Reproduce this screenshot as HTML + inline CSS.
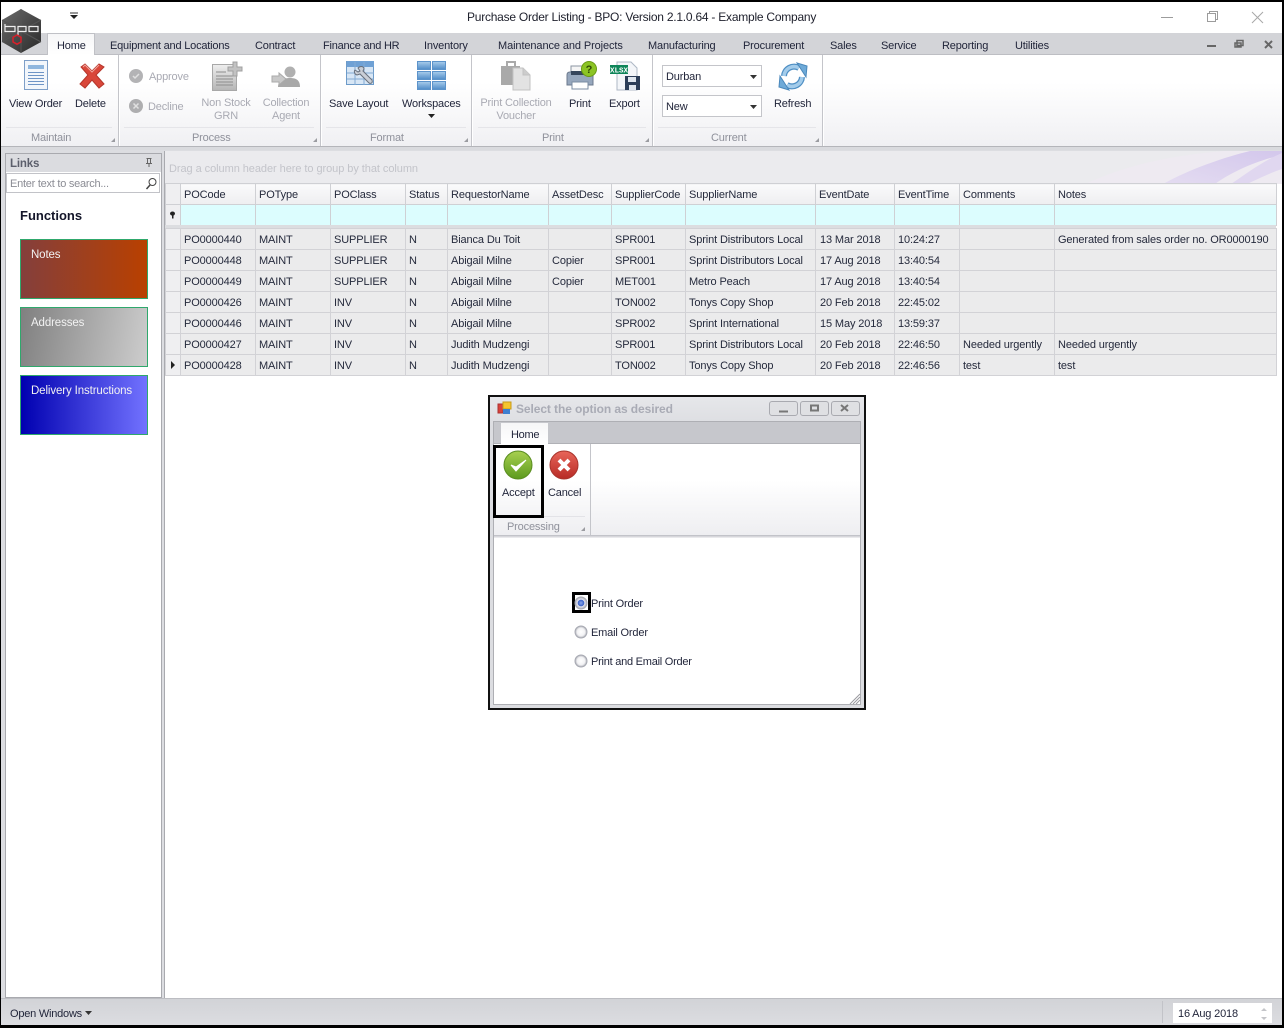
<!DOCTYPE html>
<html><head><meta charset="utf-8"><title>Purchase Order Listing</title>
<style>
html,body{margin:0;padding:0;background:#fff}
#p{position:relative;width:1284px;height:1028px;overflow:hidden;background:#fff;font:11px/14px "Liberation Sans",sans-serif;color:#1f2338}
.a{position:absolute}
.t{position:absolute;white-space:nowrap;line-height:14px;letter-spacing:-.17px;margin-top:1px}
.c{text-align:center;transform:translateX(-50%)}
.d{color:#a9aab3}
.g{color:#8f919b}
svg{position:absolute;overflow:visible}
table{position:absolute;border-collapse:collapse;table-layout:fixed;font:11px/14px "Liberation Sans",sans-serif;letter-spacing:-.12px;color:#252a3c}
td{padding:2px 0 0 3px;height:18px;border:1px solid #d2d2d6;white-space:nowrap;overflow:hidden;background:#ebebec}
td:first-child{background:#efeff1;padding:0}
td:nth-child(10){padding-left:4px}
.hd td{background:linear-gradient(#fafafb,#eeeef0);border-color:#cfd0d4;padding-left:3px}
.fl td{background:#dcfdfe;border-color:#cfd0d4}
.fl td:first-child,.hd td:first-child{background:#efeff1}
.sep{position:absolute;top:55px;width:1px;height:91px;background:#c4c5ca;box-shadow:1px 0 0 #fff}
.gl{position:absolute;top:127px;height:1px;background:#e5e5e9}
.tile{position:absolute;left:20px;width:126px;height:58px;border:1px solid #2fa86c;color:#f2f2f2}
.tile span{position:absolute;left:10px;top:8px;white-space:nowrap;font-size:11.5px;letter-spacing:-.12px}
</style></head><body><div id="p">

<!-- title bar -->
<div class="t" style="left:467px;top:10px;margin-top:0;color:#20222e;font-size:12px;letter-spacing:-.235px">Purchase Order Listing - BPO: Version 2.1.0.64 - Example Company</div>
<svg style="left:0;top:0" width="1284" height="34" fill="none">
<path d="M70 15h8l-4 4z" fill="#222"/><path d="M70 13h8" stroke="#333"/>
<path d="M1161 17.500h12" stroke="#9c9c9c"/>
<path d="M1207.500 13.500h8v8h-8zM1209.500 13.500v-2h8v8h-2" stroke="#9c9c9c"/>
<path d="M1252 12l11 11M1263 12l-11 11" stroke="#a8a8a8"/>
</svg>

<!-- tab strip -->
<div class="a" style="left:0;top:33px;width:1284px;height:22px;background:#d3d4d8;border-bottom:1px solid #bdbec3;box-sizing:border-box"></div>
<div class="a" style="left:47px;top:33px;width:48px;height:22px;background:linear-gradient(#f6f6f7,#fff);border:1px solid #c0c1c6;border-bottom:0;box-sizing:border-box"></div>
<div class="t" style="left:57px;top:38px">Home</div>
<div class="t" style="left:110px;top:38px;letter-spacing:-.2px">Equipment and Locations</div>
<div class="t" style="left:255px;top:38px">Contract</div>
<div class="t" style="left:323px;top:38px;letter-spacing:-.22px">Finance and HR</div>
<div class="t" style="left:424px;top:38px">Inventory</div>
<div class="t" style="left:498px;top:38px;letter-spacing:-.1px">Maintenance and Projects</div>
<div class="t" style="left:648px;top:38px">Manufacturing</div>
<div class="t" style="left:743px;top:38px">Procurement</div>
<div class="t" style="left:830px;top:38px">Sales</div>
<div class="t" style="left:881px;top:38px">Service</div>
<div class="t" style="left:942px;top:38px">Reporting</div>
<div class="t" style="left:1015px;top:38px">Utilities</div>
<svg style="left:0;top:33px" width="1284" height="22" fill="none">
<path d="M1207 13h9" stroke="#666" stroke-width="2"/>
<path d="M1237 7.500h6v5h-6zM1235 10h6v4h-6z" fill="#d3d4d8" stroke="#666" stroke-width="1.500"/>
<path d="M1265 8l7 7M1272 8l-7 7" stroke="#666" stroke-width="2"/>
</svg>

<!-- ribbon -->
<div class="a" style="left:0;top:55px;width:1284px;height:91px;background:linear-gradient(#fff 30%,#f0f0f3)"></div>
<div class="a" style="left:0;top:146px;width:1284px;height:4px;background:#d9dade;border-top:1px solid #b4b5ba;box-sizing:border-box"></div>
<div class="sep" style="left:118px"></div><div class="sep" style="left:320px"></div><div class="sep" style="left:471px"></div><div class="sep" style="left:652px"></div><div class="sep" style="left:822px"></div>
<div class="gl" style="left:6px;width:106px"></div><div class="gl" style="left:124px;width:190px"></div><div class="gl" style="left:326px;width:140px"></div><div class="gl" style="left:478px;width:168px"></div><div class="gl" style="left:658px;width:158px"></div>

<div class="t" style="left:9px;top:96px">View Order</div>
<div class="t" style="left:75px;top:96px">Delete</div>
<div class="t d" style="left:149px;top:69px">Approve</div>
<div class="t d" style="left:148px;top:99px">Decline</div>
<div class="t d c" style="left:226px;top:97px;margin-top:0;line-height:13px;white-space:normal;width:60px">Non Stock GRN</div>
<div class="t d c" style="left:286px;top:97px;margin-top:0;line-height:13px;white-space:normal;width:60px">Collection Agent</div>
<div class="t" style="left:329px;top:96px">Save Layout</div>
<div class="t" style="left:402px;top:96px">Workspaces</div>
<div class="t d c" style="left:516px;top:97px;margin-top:0;line-height:13px;white-space:normal;width:84px">Print Collection Voucher</div>
<div class="t" style="left:569px;top:96px">Print</div>
<div class="t" style="left:609px;top:96px">Export</div>
<div class="t" style="left:774px;top:96px">Refresh</div>
<div class="t g" style="left:31px;top:130px">Maintain</div>
<div class="t g" style="left:192px;top:130px">Process</div>
<div class="t g" style="left:370px;top:130px">Format</div>
<div class="t g" style="left:542px;top:130px">Print</div>
<div class="t g" style="left:711px;top:130px">Current</div>

<div class="a" style="left:662px;top:65px;width:98px;height:20px;background:#fff;border:1px solid #c4c5ca"></div>
<div class="a" style="left:662px;top:95px;width:98px;height:20px;background:#fff;border:1px solid #c4c5ca"></div>
<div class="t" style="left:666px;top:69px">Durban</div>
<div class="t" style="left:666px;top:99px">New</div>

<svg style="left:0;top:0" width="1284" height="150">
<defs>
<linearGradient id="gb" x1="0" y1="0" x2="0" y2="1"><stop offset="0" stop-color="#a9cdec"/><stop offset="1" stop-color="#4f8cc7"/></linearGradient>
<linearGradient id="gg" x1="0" y1="0" x2="0" y2="1"><stop offset="0" stop-color="#eee"/><stop offset="1" stop-color="#b5b5b5"/></linearGradient>
<linearGradient id="logo" x1="0" y1="0" x2="1" y2="1"><stop offset="0" stop-color="#6a6a6a"/><stop offset="1" stop-color="#2a2a2a"/></linearGradient>
</defs>
<!-- logo -->
<path d="M21 9L41 20V42L21 53L2 42V20Z" fill="url(#logo)"/>
<path d="M21 9V31L41 20M21 31L2 20M21 31V53M21 31L41 42M21 31L2 42" stroke="#555" fill="none"/>
<path d="M5 24V31.500H15V26.500H5M18 36V26.500H26V31.500H18M29 26.500H38V31.500H29Z" fill="none" stroke="#eee" stroke-width="1.200"/>
<path d="M17 35l4 2.300v4.600l-4 2.300-4-2.300v-4.600z" fill="none" stroke="#d8202a" stroke-width="1.500"/>
<!-- view order -->
<rect x="24.500" y="60.500" width="23" height="29" fill="#f2f6fb" stroke="#7e9fc8"/>
<rect x="28" y="65" width="16" height="4" fill="#8fb6de"/>
<path d="M28 72.500h16M28 75.500h16M28 78.500h16M28 81.500h16M28 84.500h16" stroke="#6d94c6"/>
<!-- delete -->
<path d="M81 67l4-3 7 7 7-7 5 3-8 8 8 9-5 4-7-8-7 8-5-4 8-9z" fill="#d9473a" stroke="#b5352a"/>
<path d="M83 67l2-2 7 7 7-7" stroke="#f0a69e" fill="none"/>
<!-- approve/decline -->
<circle cx="136" cy="76" r="7" fill="#b3b3b5"/><path d="M133 76l2 2 4-4" stroke="#e0e0e0" stroke-width="1.500" fill="none"/>
<circle cx="136" cy="106" r="7" fill="#aeaeb0"/><path d="M133.500 103.500l5 5M138.500 103.500l-5 5" stroke="#e0e0e0" stroke-width="1.500"/>
<!-- non stock -->
<rect x="212.500" y="64.500" width="24" height="26" fill="url(#gg)" stroke="#a8a8a8"/>
<path d="M216 72h10M216 76h17M216 79h17M216 82h17M216 85h17" stroke="#8d8d8d"/>
<path d="M228 67h5v-5h4v5h5v4h-5v5h-4v-5h-5z" fill="#c2c2c2" stroke="#a0a0a0"/>
<!-- collection agent -->
<circle cx="290" cy="72" r="5.500" fill="#b0b0b0"/><path d="M278 87c0-7 6-9 12-9s10 2 10 9z" fill="#a8a8a8"/>
<path d="M272 76h7v-3l7 6-7 6v-3h-7z" fill="#c8c8c8" stroke="#aaa"/>
<!-- save layout -->
<rect x="346.500" y="61.500" width="27" height="23" fill="#d7e6f5" stroke="#6d9bc9"/>
<path d="M347 61h27v6h-27z" fill="#6fa1d5"/><path d="M347 73h27M347 79h27M355 62v23M364 62v23" stroke="#83abd4"/>
<path d="M358 68c3-3 6-1 6 1l-1 2 9 9c1 3-1 4-3 3l-9-9-3 1c-3-1-3-4-2-5l3 2 2-1z" fill="#c9ced6" stroke="#68707c"/>
<!-- workspaces -->
<g fill="url(#gb)" stroke="#5c93ca"><rect x="417.500" y="61.500" width="13" height="8"/><rect x="432.500" y="61.500" width="13" height="8"/><rect x="417.500" y="71.500" width="13" height="8"/><rect x="432.500" y="71.500" width="13" height="8"/><rect x="417.500" y="81.500" width="13" height="8"/><rect x="432.500" y="81.500" width="13" height="8"/></g>
<path d="M428 114h7l-3.500 4z" fill="#222"/>
<!-- print collection voucher -->
<path d="M501 66h19v19h-19z" fill="#a9a9a9"/><path d="M507 66v-4h8v4" stroke="#aaa" stroke-width="2" fill="none"/>
<path d="M513 68h10l7 7v15h-17z" fill="#e2e2e2" stroke="#c2c2c2"/><path d="M523 68v7h7" fill="#ccc" stroke="#c2c2c2"/>
<!-- print -->
<path d="M571 66h15v9h-15z" fill="#f5f5f5" stroke="#8b95a2"/>
<path d="M567 75q0-3 3-3h20q3 0 3 3v10h-26z" fill="#96a7bd" stroke="#6c7a8d"/>
<path d="M571 71h19v4h-19z" fill="#36465c"/>
<path d="M572 82h16v7h-16z" fill="#fff" stroke="#7b8ca3"/>
<circle cx="589" cy="69" r="7.500" fill="#8cc425" stroke="#6a9a15"/>
<text x="589" y="73" font-size="11" font-weight="bold" text-anchor="middle" fill="#2f4a05" font-family="Liberation Sans">?</text>
<!-- export -->
<path d="M617 62h14l6 6v22h-20z" fill="#f4f6f9" stroke="#aeb8c5"/>
<rect x="610" y="65" width="18" height="9" fill="#0e8559"/>
<text x="619" y="72.500" font-size="7.500" font-weight="bold" text-anchor="middle" fill="#fff" font-family="Liberation Mono">XLSX</text>
<rect x="625" y="76" width="15" height="14" fill="#2c3e58"/><rect x="628" y="77" width="8" height="5" fill="#dfe6ee"/><rect x="629" y="85" width="7" height="5" fill="#dfe6ee"/>
<!-- combos -->
<path d="M750 75h7l-3.500 4zM750 105h7l-3.500 4z" fill="#333"/>
<!-- refresh -->
<g fill="none" stroke="#4f8fc4" stroke-width="6"><path d="M784 76a10 10 0 0 1 15-8"/><path d="M802 77a10 10 0 0 1-15 8"/></g>
<g fill="none" stroke="#a3cceb" stroke-width="3.500"><path d="M784 76a10 10 0 0 1 15-8"/><path d="M802 77a10 10 0 0 1-15 8"/></g>
<path d="M797 63l10 3-1 11zM789 90l-10-3 1-11z" fill="#6eaad8" stroke="#4b88bb"/>
<!-- launchers -->
<g fill="#9b9ca1"><path d="M115 138v4h-4zM317 138v4h-4zM468 138v4h-4zM649 138v4h-4zM819 138v4h-4z"/></g>
</svg>

<!-- main back -->
<div class="a" style="left:0;top:150px;width:1284px;height:848px;background:#dcdde1"></div>
<!-- links panel -->
<div class="a" style="left:5px;top:153px;width:155px;height:843px;background:#fff;border:1px solid #a9aaaf"></div>
<div class="a" style="left:6px;top:154px;width:155px;height:18px;background:#dbdce0"></div>
<div class="t" style="left:10px;top:156px;font-weight:bold;font-size:11.500px;color:#5b5e6b">Links</div>
<div class="a" style="left:6px;top:173px;width:152px;height:18px;background:#fff;border:1px solid #c2c3c8"></div>
<div class="t" style="left:10px;top:176px;color:#8b8c94;letter-spacing:-.25px">Enter text to search...</div>
<svg style="left:0;top:150px" width="165" height="50" fill="none">
<path d="M146.500 8.500h5M147.500 8.500v5h3v-5M146 13.500h6M149 14v3" stroke="#666"/>
<circle cx="152.500" cy="32" r="3.500" stroke="#444"/><path d="M150 35l-3.500 4" stroke="#444" stroke-width="1.500"/>
</svg>
<div class="t" style="left:20px;top:208px;font-weight:bold;font-size:13px;color:#14162a;letter-spacing:0">Functions</div>
<div class="tile" style="top:239px;background:linear-gradient(90deg,#843f3c,#b94000)"><span>Notes</span></div>
<div class="tile" style="top:307px;background:linear-gradient(100deg,#808080,#cdcdcd)"><span>Addresses</span></div>
<div class="tile" style="top:375px;background:linear-gradient(90deg,#0000b0,#7272ff)"><span>Delivery Instructions</span></div>

<!-- grid area -->
<div class="a" style="left:164px;top:151px;width:1118px;height:847px;background:#fff;border-left:1px solid #a9aaaf;box-sizing:border-box"></div>
<div class="a" style="left:165px;top:151px;width:1117px;height:33px;background:#ebebee;overflow:hidden">
<svg style="left:0;top:0" width="1117" height="33">
<defs><linearGradient id="sw" x1="0" y1="1" x2="1" y2="0"><stop offset="0" stop-color="#e4dcf1"/><stop offset="1" stop-color="#d3c7ec"/></linearGradient></defs>
<path d="M920 33C960 15 1000 5 1060 0H1117V33Z" fill="#eeeaf1"/>
<path d="M998 33C1025 18 1060 6 1085 0H1117V4C1090 10 1065 22 1050 33Z" fill="url(#sw)"/>
<path d="M1066 33C1082 22 1098 10 1117 2V18C1105 22 1095 27 1082 33Z" fill="#e0d7f0"/>
</svg>
</div>
<div class="t" style="left:169px;top:161px;color:#c3c4ca;letter-spacing:-.06px">Drag a column header here to group by that column</div>

<table style="left:165px;top:183px;width:1111px">
<colgroup><col style="width:15px"><col style="width:75px"><col style="width:75px"><col style="width:75px"><col style="width:42px"><col style="width:101px"><col style="width:63px"><col style="width:74px"><col style="width:130px"><col style="width:79px"><col style="width:65px"><col style="width:95px"><col style="width:222px"></colgroup>
<tr class="hd"><td></td><td>POCode</td><td>POType</td><td>POClass</td><td>Status</td><td>RequestorName</td><td>AssetDesc</td><td>SupplierCode</td><td>SupplierName</td><td>EventDate</td><td>EventTime</td><td>Comments</td><td>Notes</td></tr>
<tr class="fl"><td></td><td></td><td></td><td></td><td></td><td></td><td></td><td></td><td></td><td></td><td></td><td></td><td></td></tr>
</table>
<div class="a" style="left:165px;top:225px;width:1111px;height:3px;background:#dcdde0"></div>
<table style="left:165px;top:228px;width:1111px">
<colgroup><col style="width:15px"><col style="width:75px"><col style="width:75px"><col style="width:75px"><col style="width:42px"><col style="width:101px"><col style="width:63px"><col style="width:74px"><col style="width:130px"><col style="width:79px"><col style="width:65px"><col style="width:95px"><col style="width:222px"></colgroup>
<tr><td></td><td>PO0000440</td><td>MAINT</td><td>SUPPLIER</td><td>N</td><td>Bianca Du Toit</td><td></td><td>SPR001</td><td>Sprint Distributors Local</td><td>13 Mar 2018</td><td>10:24:27</td><td></td><td>Generated from sales order no. OR0000190</td></tr>
<tr><td></td><td>PO0000448</td><td>MAINT</td><td>SUPPLIER</td><td>N</td><td>Abigail Milne</td><td>Copier</td><td>SPR001</td><td>Sprint Distributors Local</td><td>17 Aug 2018</td><td>13:40:54</td><td></td><td></td></tr>
<tr><td></td><td>PO0000449</td><td>MAINT</td><td>SUPPLIER</td><td>N</td><td>Abigail Milne</td><td>Copier</td><td>MET001</td><td>Metro Peach</td><td>17 Aug 2018</td><td>13:40:54</td><td></td><td></td></tr>
<tr><td></td><td>PO0000426</td><td>MAINT</td><td>INV</td><td>N</td><td>Abigail Milne</td><td></td><td>TON002</td><td>Tonys Copy Shop</td><td>20 Feb 2018</td><td>22:45:02</td><td></td><td></td></tr>
<tr><td></td><td>PO0000446</td><td>MAINT</td><td>INV</td><td>N</td><td>Abigail Milne</td><td></td><td>SPR002</td><td>Sprint International</td><td>15 May 2018</td><td>13:59:37</td><td></td><td></td></tr>
<tr><td></td><td>PO0000427</td><td>MAINT</td><td>INV</td><td>N</td><td>Judith Mudzengi</td><td></td><td>SPR001</td><td>Sprint Distributors Local</td><td>20 Feb 2018</td><td>22:46:50</td><td>Needed urgently</td><td>Needed urgently</td></tr>
<tr><td></td><td>PO0000428</td><td>MAINT</td><td>INV</td><td>N</td><td>Judith Mudzengi</td><td></td><td>TON002</td><td>Tonys Copy Shop</td><td>20 Feb 2018</td><td>22:46:56</td><td>test</td><td>test</td></tr>
</table>
<svg style="left:165px;top:205px" width="16" height="170">
<path d="M5 8.500a2.500 2 0 0 1 5 0c0 1-1 2-1.500 2v3h-1.500v-3c-1 0-2-1-2-2z" fill="#222"/>
<path d="M6 156l4 4-4 4z" fill="#222"/>
</svg>

<!-- dialog -->
<div class="a" style="left:488px;top:395px;width:378px;height:315px;box-sizing:border-box;border:2px solid #111;background:linear-gradient(#e6e7ea,#dcdde1 30px)"></div>
<div class="a" style="left:493px;top:421px;width:368px;height:284px;box-sizing:border-box;border:1px solid #aeafb4;background:#fff"></div>
<div class="a" style="left:494px;top:422px;width:366px;height:22px;background:#c6c7cc;border-bottom:1px solid #b0b1b6;box-sizing:border-box"></div>
<div class="a" style="left:501px;top:423px;width:47px;height:21px;background:linear-gradient(#f6f6f7,#fff)"></div>
<div class="t" style="left:511px;top:427px;letter-spacing:-.3px">Home</div>
<div class="a" style="left:494px;top:444px;width:366px;height:91px;background:linear-gradient(#fff 40%,#eeeef1)"></div>
<div class="a" style="left:494px;top:535px;width:366px;height:3px;background:linear-gradient(#b9bac0,#f3f3f5)"></div>
<div class="a" style="left:590px;top:444px;width:1px;height:91px;background:#c4c5ca"></div>
<div class="a" style="left:497px;top:516px;width:88px;height:1px;background:#e3e3e7"></div>
<div class="t" style="left:516px;top:402px;margin-top:0;font-size:12px;font-weight:bold;color:#a9abb5;letter-spacing:-.09px">Select the option as desired</div>
<div class="t" style="left:502px;top:485px">Accept</div>
<div class="t" style="left:548px;top:485px">Cancel</div>
<div class="t g" style="left:507px;top:519px">Processing</div>
<div class="a" style="left:493px;top:445px;width:51px;height:73px;box-sizing:border-box;border:3px solid #000"></div>
<div class="a" style="left:572px;top:592px;width:19px;height:21px;box-sizing:border-box;border:3px solid #000"></div>
<div class="t" style="left:591px;top:596px">Print Order</div>
<div class="t" style="left:591px;top:625px">Email Order</div>
<div class="t" style="left:591px;top:654px;letter-spacing:-.24px">Print and Email Order</div>
<svg style="left:0;top:0" width="1284" height="720">
<defs>
<linearGradient id="okg" x1="0" y1="0" x2="0" y2="1"><stop offset="0" stop-color="#a8d050"/><stop offset="1" stop-color="#5c9a1e"/></linearGradient>
<linearGradient id="nog" x1="0" y1="0" x2="0" y2="1"><stop offset="0" stop-color="#e8655a"/><stop offset="1" stop-color="#b72b25"/></linearGradient>
<radialGradient id="rad"><stop offset="0" stop-color="#fff"/><stop offset=".65" stop-color="#f2f2f4"/><stop offset="1" stop-color="#a9abb3"/></radialGradient>
<radialGradient id="radon"><stop offset="0" stop-color="#8ea8ea"/><stop offset=".5" stop-color="#3a62c8"/><stop offset=".6" stop-color="#e8e8f0"/><stop offset="1" stop-color="#a4a6b0"/></radialGradient>
</defs>
<rect x="498" y="404" width="5" height="9" fill="#d9423a" stroke="#a33"/><rect x="503" y="402" width="8" height="7" fill="#f5c52e" stroke="#c79a17"/><rect x="503" y="409" width="7" height="5" fill="#3f7fd0"/>
<g fill="#dfe0e3" stroke="#a9aab0"><rect x="769.500" y="401.500" width="28" height="14" rx="2.500"/><rect x="800.500" y="401.500" width="28" height="14" rx="2.500"/><rect x="831.500" y="401.500" width="28" height="14" rx="2.500"/></g>
<path d="M779 411.500h9" stroke="#777" stroke-width="2"/>
<path d="M811 405.500h7v5h-7z" fill="none" stroke="#777" stroke-width="2"/>
<path d="M841 405l7 6M848 405l-7 6" stroke="#777" stroke-width="2"/>
<circle cx="518" cy="465" r="14" fill="url(#okg)" stroke="#5a8d20"/>
<path d="M511 465l5 6 10-11-10 7z" fill="#fff" stroke="#fff"/>
<circle cx="564" cy="465" r="14" fill="url(#nog)" stroke="#a9342c"/>
<path d="M559 460l10 10M569 460l-10 10" stroke="#fff" stroke-width="4"/>
<path d="M585 527v4h-4z" fill="#9b9ca1"/>
<circle cx="581" cy="603" r="6" fill="url(#radon)" stroke="#a7a9b2"/>
<circle cx="581" cy="632" r="6" fill="url(#rad)" stroke="#a7a9b2"/>
<circle cx="581" cy="661" r="6" fill="url(#rad)" stroke="#a7a9b2"/>
<path d="M850 704l10-10M853 704l7-7M856 704l4-4" stroke="#9a9a9f"/>
</svg>

<!-- status bar -->
<div class="a" style="left:0;top:998px;width:1284px;height:28px;background:linear-gradient(#d2d3d7,#dcdde1);border-top:1px solid #bcbdc2;box-sizing:border-box"></div>
<div class="t" style="left:10px;top:1006px;letter-spacing:-.22px">Open Windows</div>
<div class="a" style="left:1162px;top:1001px;width:1px;height:22px;background:#c2c3c8"></div>
<div class="a" style="left:1173px;top:1003px;width:99px;height:20px;background:#fff"></div>
<div class="t" style="left:1178px;top:1006px">16 Aug 2018</div>
<svg style="left:0;top:998px" width="1284" height="30">
<path d="M85 13h7l-3.500 4z" fill="#333"/>
<path d="M1264 10l-3 3h6zM1264 22l-3-3h6z" fill="#c4c5c9"/>
</svg>

<!-- screenshot black frame -->
<div class="a" style="left:0;top:0;width:1284px;height:1028px;box-sizing:border-box;border:solid #000;border-width:2px 2px 3px 1px;pointer-events:none"></div>
</div></body></html>
